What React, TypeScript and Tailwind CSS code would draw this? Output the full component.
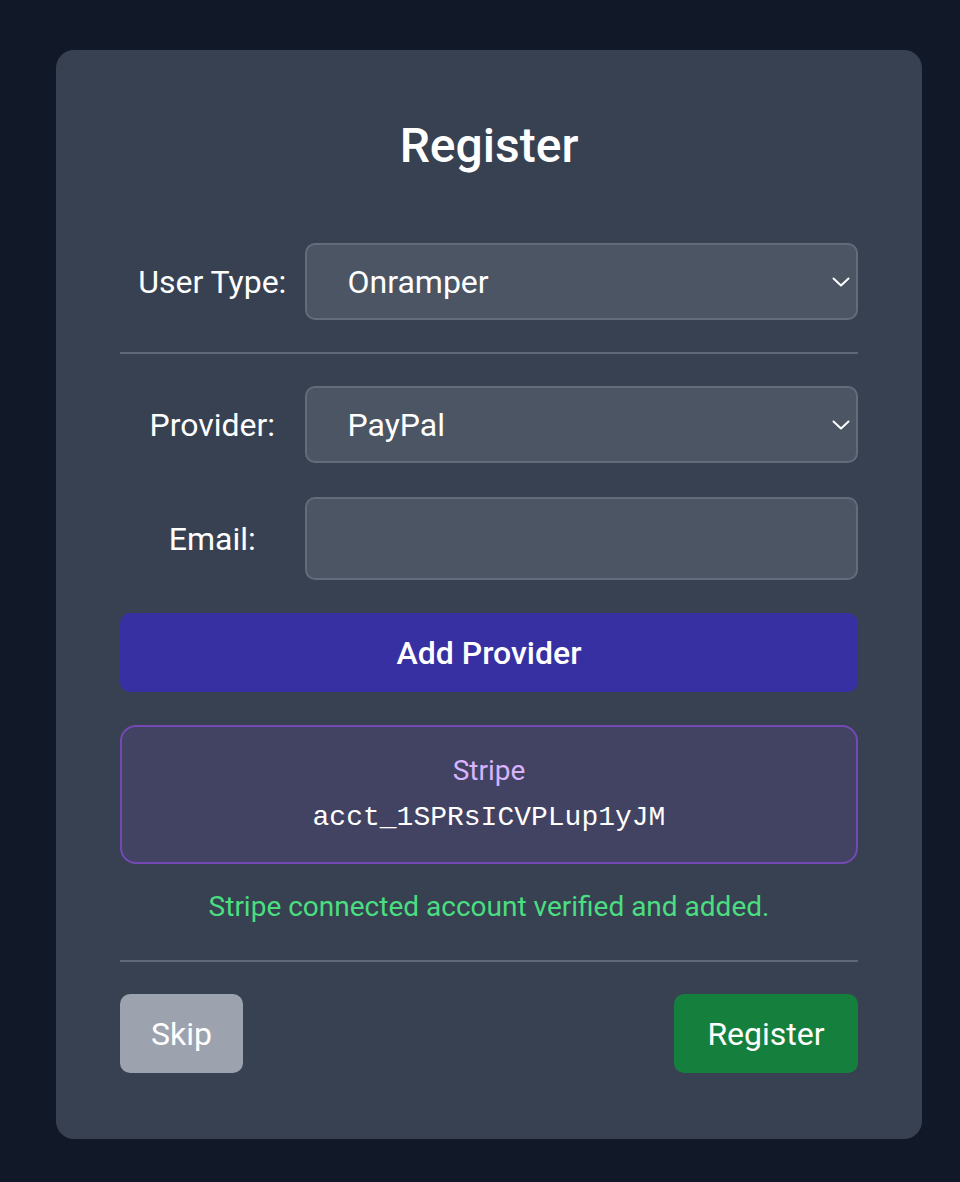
import React, { useState } from 'react';

const Chevron: React.FC = () => (
  <svg
    className="pointer-events-none absolute right-[8px] top-1/2 -translate-y-1/2"
    width="18"
    height="10"
    viewBox="0 0 18 10"
    fill="none"
  >
    <path d="M1.5 1.5 L9 8.5 L16.5 1.5" stroke="#ffffff" strokeWidth="2" strokeLinecap="round" strokeLinejoin="round" />
  </svg>
);

const Row: React.FC<{ label: string; children: React.ReactNode }> = ({ label, children }) => (
  <div className="flex items-center">
    <label className="w-1/4 text-center text-[32px] leading-[48px] text-white">{label}</label>
    <div className="relative w-3/4">{children}</div>
  </div>
);

const App: React.FC = () => {
  const [userType, setUserType] = useState('onramper');
  const [provider, setProvider] = useState('paypal');
  const [email, setEmail] = useState('');

  return (
    <div
      className="min-h-[1182px] w-full bg-[#111827] pl-[56px] pt-[50px]"
      style={{ fontFamily: 'Roboto, "Noto Sans", sans-serif' }}
    >
      <div className="flex w-[866px] flex-col rounded-[18px] bg-[#374151] px-16 pb-[66px] pt-16">
        <h1 className="mb-[65px] text-center text-[48px] font-medium leading-[64px] text-white">Register</h1>

        <Row label="User Type:">
          <select
            value={userType}
            onChange={e => setUserType(e.target.value)}
            className="h-[77px] w-full appearance-none rounded-[10px] border-2 border-[#636c7a] bg-[#4b5563] pl-[41px] text-[32px] text-white outline-none"
          >
            <option value="onramper">Onramper</option>
            <option value="offramper">Offramper</option>
          </select>
          <Chevron />
        </Row>

        <div className="mb-[32px] mt-[32px] h-[2px] w-full bg-[#5f6876]" />

        <Row label="Provider:">
          <select
            value={provider}
            onChange={e => setProvider(e.target.value)}
            className="h-[77px] w-full appearance-none rounded-[10px] border-2 border-[#636c7a] bg-[#4b5563] pl-[41px] text-[32px] text-white outline-none"
          >
            <option value="paypal">PayPal</option>
            <option value="revolut">Revolut</option>
            <option value="stripe">Stripe</option>
          </select>
          <Chevron />
        </Row>

        <div className="mt-[34px]">
          <Row label="Email:">
            <input
              type="email"
              value={email}
              onChange={e => setEmail(e.target.value)}
              className="h-[83px] w-full rounded-[10px] border-2 border-[#636c7a] bg-[#4b5563] px-[24px] text-[32px] text-white outline-none"
            />
          </Row>
        </div>

        <button className="mt-[33px] h-[79px] w-full rounded-[10px] bg-[#3730a3] text-[32px] font-medium text-white">
          Add Provider
        </button>

        <div className="mt-[33px] flex flex-col items-center rounded-[16px] border-2 border-[#7549b5] bg-[#424262] py-[24px]">
          <span className="text-[28px] leading-[40px] text-[#d8b4fe]">Stripe</span>
          <span
            className="mt-[7px] text-[28px] leading-[40px] text-white"
            style={{ fontFamily: '"Liberation Mono", "DejaVu Sans Mono", monospace' }}
          >
            acct_1SPRsICVPLup1yJM
          </span>
        </div>

        <p className="mt-[23px] text-center text-[28px] leading-[40px] text-[#4ade80]">
          Stripe connected account verified and added.
        </p>

        <div className="mb-[32px] mt-[33px] h-[2px] w-full bg-[#5f6876]" />

        <div className="flex items-center justify-between">
          <button className="h-[79px] w-[123px] rounded-[10px] bg-[#9ca3af] text-[32px] text-white">Skip</button>
          <button className="h-[79px] w-[184px] rounded-[10px] bg-[#15803d] text-[32px] text-white">Register</button>
        </div>
      </div>
    </div>
  );
};

export default App;
